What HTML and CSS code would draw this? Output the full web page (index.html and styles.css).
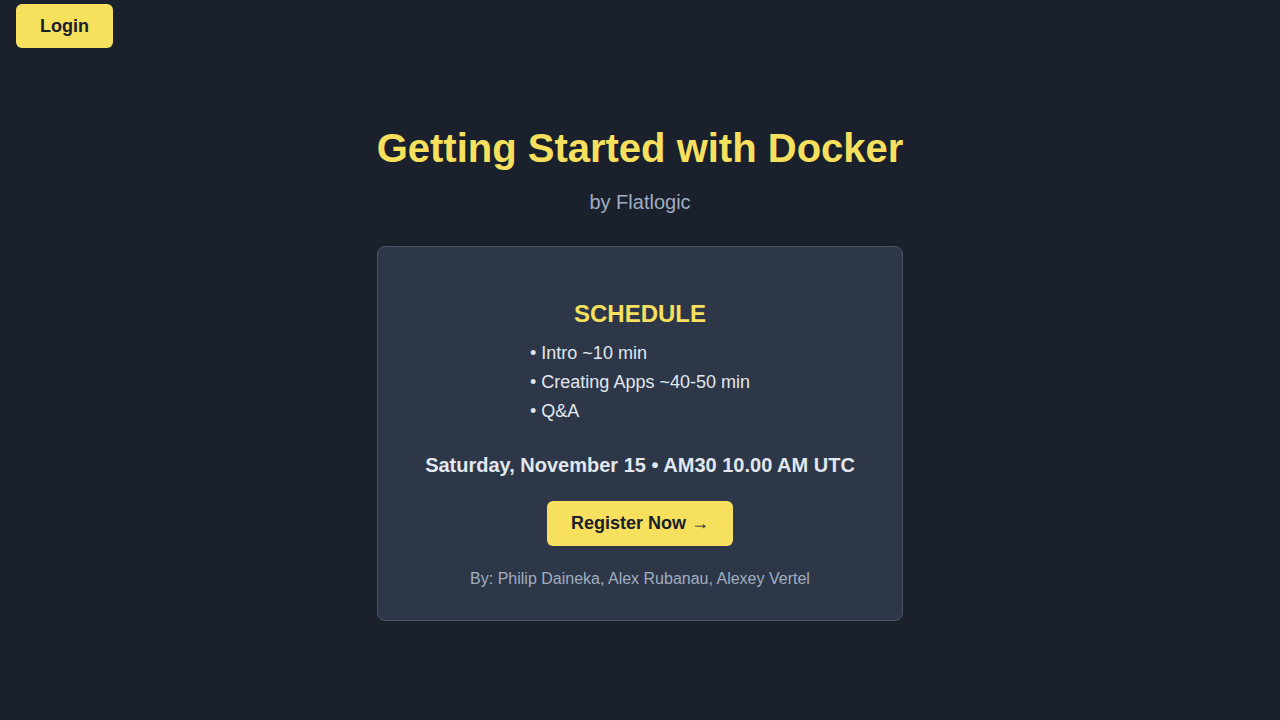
FILE: index.html
```html
<!DOCTYPE html>
<html lang="en">
<head>
  <meta charset="UTF-8">
  <meta name="viewport" content="width=device-width, initial-scale=1.0">
  <title>Getting Started with Docker</title>
  <link rel="stylesheet" href="styles.css">
</head>
<body>
  <header class="top-bar">
    <button class="btn login-btn">Login</button>
  </header>

  <main class="hero">
    <h1 class="title">Getting Started with Docker</h1>
    <p class="subtitle">by Flatlogic</p>

    <div class="card">
      <h2 class="card-heading">SCHEDULE</h2>
      <ul class="schedule">
        <li>• Intro ~10 min</li>
        <li>• Creating Apps ~40-50 min</li>
        <li>• Q&amp;A</li>
      </ul>
      <p class="date">Saturday, November 15 • AM30 10.00 AM UTC</p>
      <button class="btn register-btn">Register Now →</button>
      <p class="speakers">By: Philip Daineka, Alex Rubanau, Alexey Vertel</p>
    </div>
  </main>
</body>
</html>
```

FILE: styles.css
```css
body {
  margin: 0;
  min-height: 720px;
  background-color: #1a202c;
  color: #e2e8f0;
  font-family: "Liberation Sans", Arial, sans-serif;
}
.top-bar {
  padding: 4px 16px 0;
}
.btn {
  border: none;
  border-radius: 6px;
  background-color: #f6e05e;
  color: #1a202c;
  font-family: inherit;
  font-weight: bold;
  font-size: 18px;
  line-height: 24px;
  cursor: pointer;
}
.login-btn {
  padding: 10px 24px;
}
.hero {
  display: flex;
  flex-direction: column;
  align-items: center;
  text-align: center;
  padding-top: 76px;
}
.title {
  margin: 0;
  font-size: 40px;
  line-height: 48px;
  color: #f6e05e;
}
.subtitle {
  margin: 16px 0 0;
  font-size: 20px;
  line-height: 28px;
  color: #a0aec0;
}
.card {
  box-sizing: border-box;
  width: 526px;
  margin-top: 30px;
  padding: 53px 32px 29px;
  background-color: #2d3748;
  border: 1px solid #4a5568;
  border-radius: 8px;
  display: flex;
  flex-direction: column;
  align-items: center;
}
.card-heading {
  margin: 0;
  font-size: 24px;
  line-height: 28px;
  color: #f6e05e;
}
.schedule {
  list-style: none;
  margin: 11px 0 0;
  padding: 0;
  text-align: left;
  font-size: 18px;
  line-height: 29px;
}
.date {
  margin: 25px 0 0;
  font-size: 20px;
  font-weight: bold;
  line-height: 28px;
}
.register-btn {
  margin-top: 22px;
  padding: 10px 24px 11px;
}
.speakers {
  margin: 21px 0 0;
  font-size: 16px;
  line-height: 24px;
  color: #a0aec0;
}
```
